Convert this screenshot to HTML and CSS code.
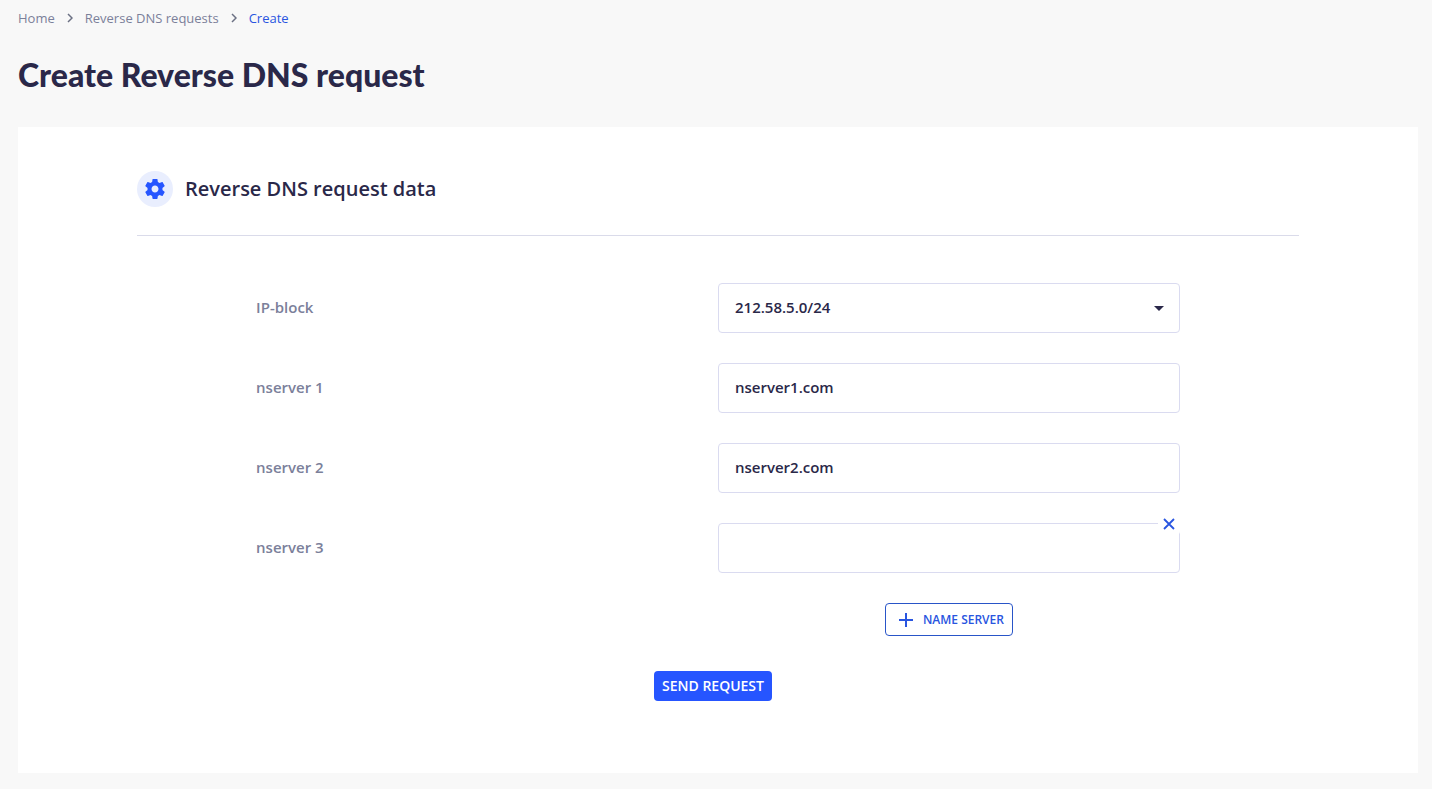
FILE: index.html
```html
<!DOCTYPE html>
<html lang="en">
<head>
  <meta charset="UTF-8" />
  <meta name="viewport" content="width=device-width, initial-scale=1" />
  <title>Create Reverse DNS request</title>
  <link rel="stylesheet" href="styles.css">
</head>
<body>
  <nav class="breadcrumbs" aria-label="Breadcrumb">
    <a href="#">Home</a>
    <svg class="chevron" viewBox="0 0 6 10"><path d="M1 1l4 4-4 4" /></svg>
    <a href="#">Reverse DNS requests</a>
    <svg class="chevron" viewBox="0 0 6 10"><path d="M1 1l4 4-4 4" /></svg>
    <a href="#" class="active" aria-current="page">Create</a>
  </nav>

  <h1>Create Reverse DNS request</h1>

  <main class="panel">
    <div class="panel-header">
      <span class="panel-icon">
        <svg viewBox="0 0 24 24"><path d="M19.43 12.98c.04-.32.07-.64.07-.98s-.03-.66-.07-.98l2.11-1.65c.19-.15.24-.42.12-.64l-2-3.46c-.12-.22-.39-.3-.61-.22l-2.49 1c-.52-.4-1.08-.73-1.69-.98l-.38-2.65C14.46 2.18 14.25 2 14 2h-4c-.25 0-.46.18-.49.42l-.38 2.65c-.61.25-1.17.59-1.69.98l-2.49-1c-.23-.09-.49 0-.61.22l-2 3.46c-.13.22-.07.49.12.64l2.11 1.65c-.04.32-.07.65-.07.98s.03.66.07.98l-2.11 1.65c-.19.15-.24.42-.12.64l2 3.46c.12.22.39.3.61.22l2.49-1c.52.4 1.08.73 1.69.98l.38 2.65c.03.24.24.42.49.42h4c.25 0 .46-.18.49-.42l.38-2.65c.61-.25 1.17-.59 1.69-.98l2.49 1c.23.09.49 0 .61-.22l2-3.46c.12-.22.07-.49-.12-.64l-2.11-1.65zM12 15.5c-1.93 0-3.500-1.570-3.500-3.500s1.570-3.500 3.500-3.500 3.500 1.570 3.500 3.500-1.570 3.500-3.500 3.500z" /></svg>
      </span>
      <h2>Reverse DNS request data</h2>
    </div>

    <form id="dnsForm">
      <div class="row">
        <label for="ipBlock">IP-block</label>
        <div class="field">
          <select id="ipBlock" name="ipBlock">
            <option value="212.58.5.0/24">212.58.5.0/24</option>
          </select>
          <svg class="caret" viewBox="0 0 10 5"><path d="M0 0h10L5 5z" /></svg>
        </div>
      </div>

      <div class="row">
        <label for="nserver1">nserver 1</label>
        <div class="field">
          <input type="text" id="nserver1" name="nserver1" value="nserver1.com" />
        </div>
      </div>

      <div class="row">
        <label for="nserver2">nserver 2</label>
        <div class="field">
          <input type="text" id="nserver2" name="nserver2" value="nserver2.com" />
        </div>
      </div>

      <div class="row">
        <label for="nserver3">nserver 3</label>
        <div class="field">
          <input type="text" id="nserver3" name="nserver3" />
          <button type="button" class="remove-btn" aria-label="Remove nserver 3">
            <svg viewBox="0 0 12 12"><path d="M1 1l10 10M11 1L1 11" /></svg>
          </button>
        </div>
      </div>

      <div class="row add-row">
        <button type="button" class="add-btn">
          <svg viewBox="0 0 14 14"><path d="M7 0v14M0 7h14" /></svg>
          NAME SERVER
        </button>
      </div>
    </form>

    <div class="actions">
      <button type="submit" form="dnsForm" class="submit-btn">SEND REQUEST</button>
    </div>
  </main>
</body>
</html>
```

FILE: styles.css
```css
* {
  box-sizing: border-box;
}
body {
  margin: 0;
  padding: 8px 14px 16px 18px;
  font-family: "Open Sans", "Noto Sans", sans-serif;
  background-color: #f8f8f8;
  color: #2a2849;
}
.breadcrumbs {
  display: flex;
  align-items: center;
  gap: 12px;
  font-size: 13px;
  line-height: 20px;
}
.breadcrumbs a {
  color: #7b809a;
  text-decoration: none;
}
.breadcrumbs .active {
  color: #2955e0;
}
.chevron {
  width: 6px;
  height: 10px;
  fill: none;
  stroke: #6b7083;
  stroke-width: 1.5;
}
h1 {
  margin: 24px 0 30px;
  font-family: Lato, sans-serif;
  font-size: 32px;
  font-weight: 900;
  line-height: 45px;
}
.panel {
  padding: 44px 8.5% 72px;
  background-color: #fff;
}
.panel-header {
  display: flex;
  align-items: center;
  gap: 12px;
  padding-bottom: 28px;
  border-bottom: 1px solid #dadbea;
}
.panel-icon {
  display: flex;
  align-items: center;
  justify-content: center;
  width: 36px;
  height: 36px;
  border-radius: 50%;
  background-color: #e9eefe;
}
.panel-icon svg {
  width: 24px;
  height: 24px;
  fill: #2655ff;
}
h2 {
  margin: 0;
  font-size: 20px;
  font-weight: 600;
  line-height: 28px;
}
form {
  display: flex;
  flex-direction: column;
  gap: 30px;
  padding: 47px 10.25% 0;
}
.row {
  display: grid;
  grid-template-columns: 1fr 1fr;
  align-items: center;
}
label {
  padding-bottom: 2px;
  font-size: 15px;
  font-weight: 600;
  line-height: 20px;
  color: #7b809a;
}
.field {
  position: relative;
}
input,
select {
  display: block;
  width: 100%;
  height: 50px;
  padding: 0 16px 2px;
  border: 1px solid #dadbf0;
  border-radius: 4px;
  background-color: #fff;
  font-family: inherit;
  font-size: 15px;
  font-weight: 600;
  line-height: 20px;
  color: #2a2849;
  appearance: none;
}
button {
  border: none;
  border-radius: 4px;
  font-family: inherit;
  cursor: pointer;
}
.caret {
  position: absolute;
  top: 23px;
  right: 16px;
  width: 10px;
  height: 5px;
  fill: #2a2849;
  pointer-events: none;
}
.remove-btn {
  position: absolute;
  top: -10px;
  right: 0;
  display: flex;
  align-items: center;
  justify-content: center;
  width: 22px;
  height: 22px;
  padding: 0;
  background-color: #fff;
}
.remove-btn svg {
  width: 12px;
  height: 12px;
  fill: none;
  stroke: #2955e0;
  stroke-width: 1.8;
}
.add-btn {
  grid-column: 2;
  justify-self: center;
  display: flex;
  align-items: center;
  gap: 10px;
  height: 33px;
  padding: 0 8px 0 13px;
  border: 1px solid #2955c8;
  background-color: #fff;
  font-size: 12px;
  font-weight: 600;
  color: #2955e0;
}
.add-btn svg {
  width: 14px;
  height: 14px;
  fill: none;
  stroke: #2955e0;
  stroke-width: 2;
}
.actions {
  display: flex;
  justify-content: center;
  padding: 35px 10px 0 0;
}
.submit-btn {
  height: 30px;
  padding: 0 8px 1px;
  background-color: #2655ff;
  font-size: 14px;
  font-weight: 600;
  color: #fff;
}
```
